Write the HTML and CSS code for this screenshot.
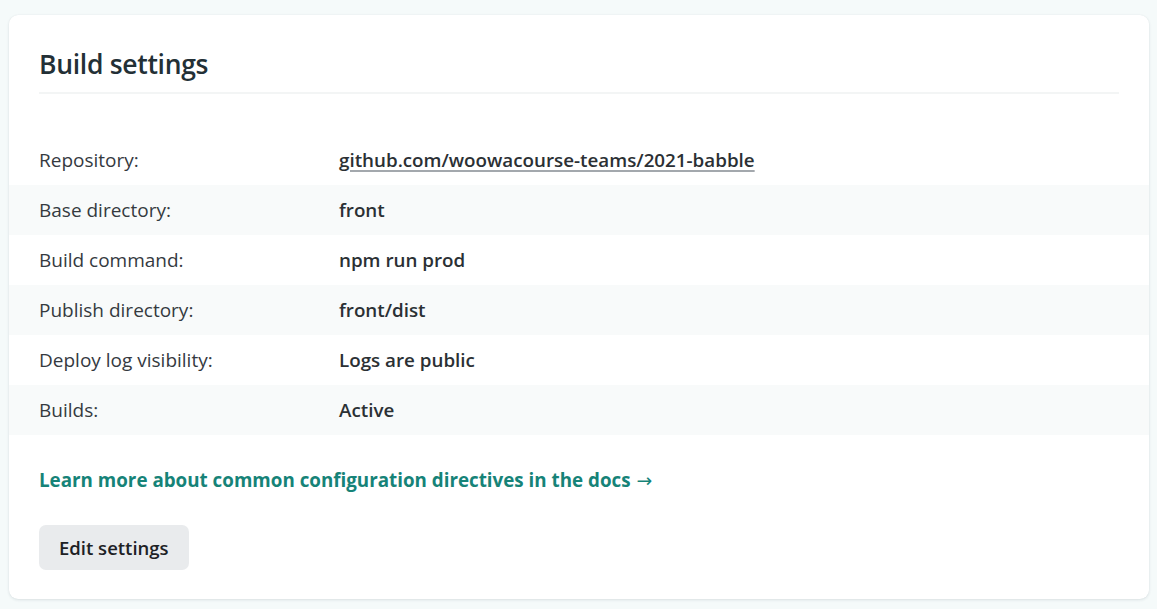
FILE: index.html
```html
<!DOCTYPE html>
<html lang="en">
<head>
<meta charset="utf-8">
<title>Build settings</title>
<link rel="stylesheet" href="styles.css">
</head>
<body>
<section class="card">
  <header class="card-header">
    <h2 class="card-title">Build settings</h2>
  </header>
  <dl class="settings">
    <div class="row">
      <dt class="label">Repository:</dt>
      <dd class="value"><a class="repo-link" href="#">github.com/woowacourse-teams/2021-babble</a></dd>
    </div>
    <div class="row alt">
      <dt class="label">Base directory:</dt>
      <dd class="value">front</dd>
    </div>
    <div class="row">
      <dt class="label">Build command:</dt>
      <dd class="value">npm run prod</dd>
    </div>
    <div class="row alt">
      <dt class="label">Publish directory:</dt>
      <dd class="value">front/dist</dd>
    </div>
    <div class="row">
      <dt class="label">Deploy log visibility:</dt>
      <dd class="value">Logs are public</dd>
    </div>
    <div class="row alt">
      <dt class="label">Builds:</dt>
      <dd class="value">Active</dd>
    </div>
  </dl>
  <p class="docs"><a class="docs-link" href="#">Learn more about common configuration directives in the docs<span class="arrow">→</span></a></p>
  <div class="actions">
    <button class="btn" type="button">Edit settings</button>
  </div>
</section>
</body>
</html>
```

FILE: styles.css
```css
* { box-sizing: border-box; }

html, body {
  margin: 0;
  padding: 0;
  background: #f5fafa;
}

body {
  padding: 15px 8px 9px 9px;
  font-family: "Open Sans", "Noto Sans", "Liberation Sans", sans-serif;
  color: #2f3438;
}

.card {
  background: #ffffff;
  border-radius: 9px;
  box-shadow: 0 1px 3px rgba(30, 60, 70, 0.12), 0 0 1px rgba(30, 60, 70, 0.08);
  padding: 0 0 29px;
}

.card-header {
  margin: 0 30px;
  padding-top: 31px;
  height: 79px;
  border-bottom: 2px solid #f3f5f5;
}

.card-title {
  margin: 0;
  font-size: 26.5px;
  font-weight: 600;
  line-height: 36px;
  color: #233036;
  letter-spacing: -0.3px;
}

.settings {
  margin: 41px 0 0;
  padding: 0;
}

.row {
  display: flex;
  align-items: center;
  height: 50px;
  padding: 0 30px;
}

.row.alt {
  background: #f8fafa;
}

.label {
  width: 300px;
  flex: none;
  margin: 0;
  font-size: 19px;
  color: #353a3f;
}

.value {
  margin: 0;
  font-size: 18.8px;
  font-weight: 600;
  color: #2b3034;
}

.repo-link {
  color: #2b3034;
  font-weight: 600;
  text-decoration: underline;
  text-decoration-color: #a3a8ad;
  text-decoration-thickness: 2px;
  text-underline-offset: 3px;
}

.docs {
  margin: 33px 30px 0;
  font-size: 18.8px;
  line-height: 24px;
}

.docs-link {
  color: #168378;
  font-weight: 700;
  text-decoration: none;
}

.arrow {
  font-family: "DejaVu Sans", sans-serif;
  font-weight: 400;
  margin-left: 6px;
}

.actions {
  margin: 32px 30px 0;
}

.btn {
  font-family: inherit;
  font-size: 18.5px;
  font-weight: 600;
  color: #1d2125;
  background: #e9ebed;
  border: none;
  border-radius: 7px;
  height: 45px;
  padding: 0 20px;
}
```
